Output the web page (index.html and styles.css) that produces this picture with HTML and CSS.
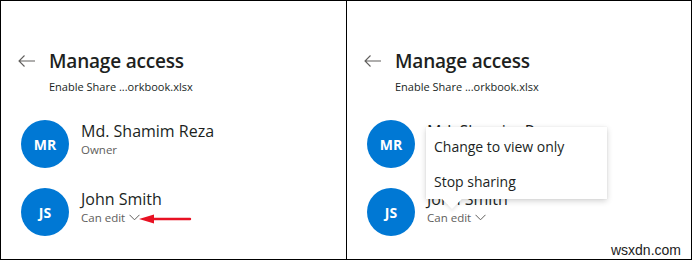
FILE: index.html
```html
<!DOCTYPE html>
<html lang="en">
<head>
    <meta charset="UTF-8">
    <meta name="viewport" content="width=device-width, initial-scale=1.0">
    <title>Manage access</title>
    <link rel="stylesheet" href="styles.css">
</head>
<body>
    <div class="frame">
        <!-- Trước: menu đóng -->
        <div class="panel">
            <div class="panel-header">
                <svg class="back-icon" width="17" height="12" viewBox="0 0 17 12">
                    <path d="M17 6H1M6.5 0.5L1 6l5.5 5.5" fill="none" stroke="#605e5c" stroke-width="1.1"/>
                </svg>
                <h1>Manage access</h1>
            </div>
            <p class="file-name">Enable Share ...orkbook.xlsx</p>

            <div class="people">
                <div class="person">
                    <div class="avatar">MR</div>
                    <div class="person-info">
                        <div class="person-name">Md. Shamim Reza</div>
                        <div class="person-role">Owner</div>
                    </div>
                </div>
                <div class="person">
                    <div class="avatar">JS</div>
                    <div class="person-info">
                        <div class="person-name">John Smith</div>
                        <div class="person-role">Can edit
                            <svg class="chevron" width="11" height="7" viewBox="0 0 11 7">
                                <path d="M0.5 0.8L5.5 5.8L10.5 0.8" fill="none" stroke="#605e5c" stroke-width="1"/>
                            </svg>
                        </div>
                    </div>
                </div>
            </div>

            <svg class="red-arrow" width="54" height="10" viewBox="0 0 54 10">
                <path d="M0 5L15 0.5V9.5Z" fill="#e81123"/>
                <path d="M12 5H51" stroke="#e81123" stroke-width="2.4" stroke-linecap="round"/>
            </svg>
        </div>

        <!-- Sau: menu mở -->
        <div class="panel">
            <div class="panel-header">
                <svg class="back-icon" width="17" height="12" viewBox="0 0 17 12">
                    <path d="M17 6H1M6.5 0.5L1 6l5.5 5.5" fill="none" stroke="#605e5c" stroke-width="1.1"/>
                </svg>
                <h1>Manage access</h1>
            </div>
            <p class="file-name">Enable Share ...orkbook.xlsx</p>

            <div class="people">
                <div class="person">
                    <div class="avatar">MR</div>
                    <div class="person-info">
                        <div class="person-name">Md. Shamim Reza</div>
                        <div class="person-role">Owner</div>
                    </div>
                </div>
                <div class="person">
                    <div class="avatar">JS</div>
                    <div class="person-info">
                        <div class="person-name">John Smith</div>
                        <div class="person-role">Can edit
                            <svg class="chevron" width="11" height="7" viewBox="0 0 11 7">
                                <path d="M0.5 0.8L5.5 5.8L10.5 0.8" fill="none" stroke="#605e5c" stroke-width="1"/>
                            </svg>
                        </div>
                    </div>
                </div>
            </div>

            <div class="menu">
                <div class="menu-item">Change to view only</div>
                <div class="menu-item">Stop sharing</div>
                <span class="menu-beak"></span>
            </div>

            <span class="watermark">wsxdn.com</span>
        </div>
    </div>
</body>
</html>
```

FILE: styles.css
```css
:root {
    --blue: #0078d4;
    --text-dark: #201f1e;
    --text-gray: #605e5c;
}

* {
    margin: 0;
    padding: 0;
    box-sizing: border-box;
}

body {
    background-color: #fff;
    font-family: 'Open Sans', 'Noto Sans', sans-serif;
    color: var(--text-dark);
}

.frame {
    display: flex;
    width: 692px;
    height: 260px;
    border: 1px solid #000;
}

.panel {
    position: relative;
    width: 345px;
    padding: 46px 0 0 17px;
}

.panel + .panel {
    border-left: 1px solid #000;
}

.panel-header {
    display: flex;
    align-items: center;
    gap: 14px;
}

.back-icon {
    display: block;
}

.panel-header h1 {
    font-size: 19px;
    font-weight: 600;
    line-height: 28px;
    letter-spacing: -0.2px;
}

.file-name {
    margin: 4px 0 0 31px;
    font-size: 11px;
    line-height: 16px;
    color: var(--text-dark);
}

.people {
    display: flex;
    flex-direction: column;
    gap: 20px;
    margin: 25px 0 0 3px;
}

.person {
    display: flex;
    align-items: flex-start;
    gap: 12px;
}

.avatar {
    width: 48px;
    height: 48px;
    border-radius: 50%;
    background-color: var(--blue);
    color: #fff;
    display: flex;
    align-items: center;
    justify-content: center;
    font-size: 14px;
    font-weight: 700;
}

.person-name {
    font-size: 16px;
    line-height: 22px;
    color: var(--text-dark);
}

.person-role {
    font-size: 11.5px;
    line-height: 16px;
    color: var(--text-gray);
}

.chevron {
    margin-left: 1px;
    vertical-align: 1px;
}

.red-arrow {
    position: absolute;
    left: 138px;
    top: 213px;
}

.menu {
    position: absolute;
    left: 79px;
    top: 126px;
    width: 181px;
    height: 72px;
    padding-top: 2px;
    background-color: #fff;
    box-shadow: 0 2px 6px rgba(0, 0, 0, 0.18), 0 0 1px rgba(0, 0, 0, 0.1);
}

.menu-item {
    height: 35px;
    padding: 0 8px;
    font-size: 14px;
    line-height: 35px;
    color: var(--text-dark);
}

.menu-beak {
    position: absolute;
    left: 19px;
    bottom: -7px;
    width: 14px;
    height: 14px;
    background-color: #fff;
    transform: rotate(45deg);
    box-shadow: 2px 2px 3px rgba(0, 0, 0, 0.08);
}

.watermark {
    position: absolute;
    right: 10px;
    bottom: 1px;
    font-family: 'Liberation Sans', Arial, sans-serif;
    font-size: 14px;
    color: #222;
}
```
